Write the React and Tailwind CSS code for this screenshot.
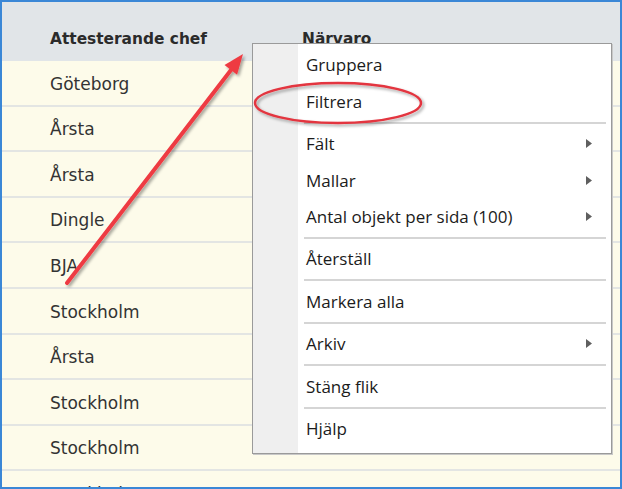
import React from "react";

const rows = ["Göteborg","Årsta","Årsta","Dingle","BJA","Stockholm","Årsta","Stockholm","Stockholm","Stockholm"];

const Tri = () => (
  <svg width="8" height="11" viewBox="0 0 8 11" className="block">
    <path d="M1 1 L7 5.5 L1 10 Z" fill="#5f5f5f" />
  </svg>
);

const Item = ({ label, sub }) => (
  <div className="flex h-[36.4px] items-center pl-[53px] pr-[18px]">
    <span className="flex-1 text-[17px] text-[#1b1b1b]">{label}</span>
    {sub && <Tri />}
  </div>
);

const Sep = () => (
  <div className="flex h-[6px] items-center pl-[51px] pr-[5px]">
    <div className="h-[2px] w-full bg-[#d5d5d5]" />
  </div>
);

export default function App() {
  return (
    <div className="relative h-[489px] w-[622px] overflow-hidden border-2 border-[#3b87d6] bg-[#fdfbea] font-['DejaVu_Sans',sans-serif]">
      <div className="flex h-[59px] items-end bg-[#e1e5e8] pb-[10px] text-[15.4px] font-bold text-[#2b2b2b]">
        <div className="w-[300px] pl-[48px]">Attesterande chef</div>
        <div>Närvaro</div>
      </div>
      {rows.map((r, i) => (
        <div key={i} className="flex h-[45.6px] items-center border-b-2 border-[#e3e5e3] pt-[3px] text-[17px] text-[#333]">
          <div className="w-[300px] pl-[48px]">{r}</div>
          <div>{i === 8 ? "100" : ""}</div>
        </div>
      ))}

      <div className="absolute left-[250px] top-[41px] w-[360px] border border-[#9a9a9a] bg-white pt-[3px] pb-[6px] font-['Open_Sans',sans-serif] shadow-[1px_1px_0_#c8c8c8]">
        <div className="absolute bottom-0 left-0 top-0 w-[45px] bg-[#efefef]" />
        <div className="relative">
          <Item label="Gruppera" />
          <Item label="Filtrera" />
          <Sep />
          <Item label="Fält" sub />
          <Item label="Mallar" sub />
          <Item label="Antal objekt per sida (100)" sub />
          <Sep />
          <Item label="Återställ" />
          <Sep />
          <Item label="Markera alla" />
          <Sep />
          <Item label="Arkiv" sub />
          <Sep />
          <Item label="Stäng flik" />
          <Sep />
          <Item label="Hjälp" />
        </div>
      </div>

      <svg className="pointer-events-none absolute left-[-2px] top-[-2px]" width="622" height="489" viewBox="0 0 622 489">
        <defs>
          <filter id="sh" x="-20%" y="-20%" width="140%" height="140%">
            <feDropShadow dx="2" dy="2" stdDeviation="1.5" floodColor="#000" floodOpacity="0.35" />
          </filter>
        </defs>
        <g filter="url(#sh)">
          <ellipse cx="338" cy="103" rx="83" ry="20" fill="none" stroke="#e3363f" strokeWidth="2.5" />
          <line x1="67" y1="283" x2="231" y2="70" stroke="#ee3b43" strokeWidth="4" strokeLinecap="round" />
          <polygon points="243,54 224.5,64.9 237.1,74.7" fill="#ee3b43" />
        </g>
      </svg>
    </div>
  );
}
